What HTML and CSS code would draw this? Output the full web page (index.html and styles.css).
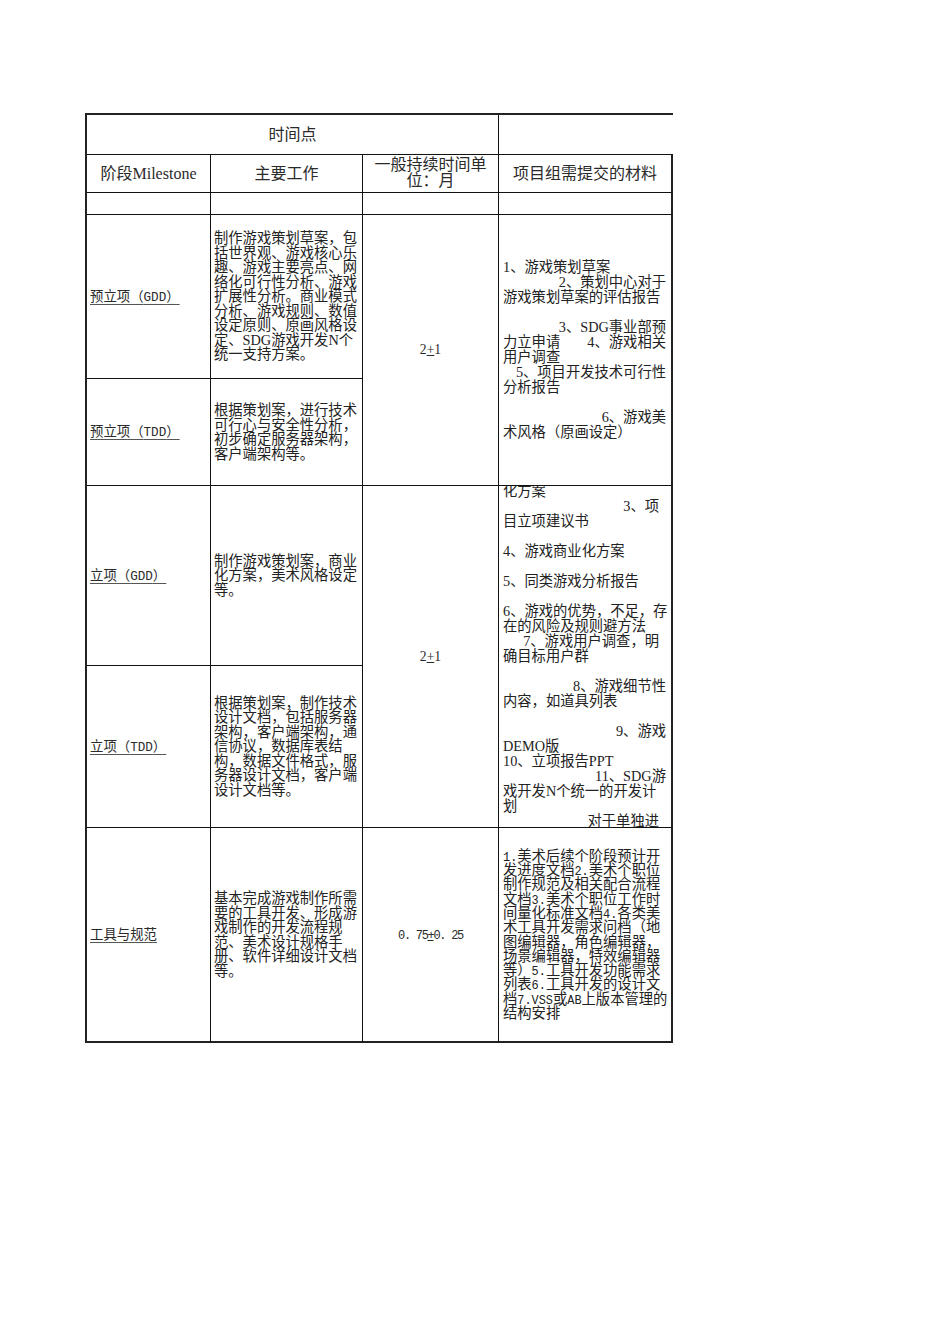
FILE: index.html
```html
<!DOCTYPE html>
<html lang="zh-CN">
<head>
<meta charset="utf-8">
<title>项目阶段</title>
<link rel="stylesheet" href="styles.css">
</head>
<body>
<div class="page">
  <div class="sheet">
    <div class="cell hdr span3 mid ctr"><div>时间点</div></div>
    <div class="cell hdr top-last"></div>

    <div class="cell hdr mid ctr"><div>阶段Milestone</div></div>
    <div class="cell hdr mid ctr"><div>主要工作</div></div>
    <div class="cell hdr mid ctr tight"><div>一般持续时间单<br>位：月</div></div>
    <div class="cell hdr mid ctr last"><div>项目组需提交的材料</div></div>

    <div class="cell"></div>
    <div class="cell"></div>
    <div class="cell"></div>
    <div class="cell last"></div>

    <div class="cell mid label"><div><span class="ul">预立项（<span class="m">GDD</span>）</span></div></div>
    <div class="cell mid work"><div>制作游戏策划草案，包<br>括世界观、游戏核心乐<br>趣、游戏主要亮点、网<br>络化可行性分析、游戏<br>扩展性分析。商业模式<br>分析、游戏规则、数值<br>设定原则、原画风格设<br>定、SDG游戏开发N个<br>统一支持方案。</div></div>
    <div class="cell mid ctr dur r2"><div>2<u>+</u>1</div></div>
    <div class="cell mid mat r2 last">
      <div class="ln">1、游戏策划草案</div>
      <div class="ln rt">2、策划中心对于</div>
      <div class="ln">游戏策划草案的评估报告</div>
      <div class="ln">&nbsp;</div>
      <div class="ln rt">3、SDG事业部预</div>
      <div class="ln split"><span>力立申请</span><span>4、游戏相关</span></div>
      <div class="ln">用户调查</div>
      <div class="ln rt">5、项目开发技术可行性</div>
      <div class="ln">分析报告</div>
      <div class="ln">&nbsp;</div>
      <div class="ln rt">6、游戏美</div>
      <div class="ln">术风格（原画设定）</div>
    </div>

    <div class="cell mid label"><div><span class="ul">预立项（<span class="m">TDD</span>）</span></div></div>
    <div class="cell mid work"><div>根据策划案，进行技术<br>可行心与安全性分析，<br>初步确定服务器架构，<br>客户端架构等。</div></div>

    <div class="cell mid label"><div><span class="ul">立项（<span class="m">GDD</span>）</span></div></div>
    <div class="cell mid work"><div>制作游戏策划案，商业<br>化方案，美术风格设定<br>等。</div></div>
    <div class="cell mid ctr dur r2"><div>2<u>+</u>1</div></div>
    <div class="cell mid mat r2 last">
      <div class="ln">化方案</div>
      <div class="ln rt pr">3、项</div>
      <div class="ln">目立项建议书</div>
      <div class="ln">&nbsp;</div>
      <div class="ln">4、游戏商业化方案</div>
      <div class="ln">&nbsp;</div>
      <div class="ln">5、同类游戏分析报告</div>
      <div class="ln">&nbsp;</div>
      <div class="ln">6、游戏的优势，不足，存</div>
      <div class="ln">在的风险及规则避方法</div>
      <div class="ln rt pr">7、游戏用户调查，明</div>
      <div class="ln">确目标用户群</div>
      <div class="ln">&nbsp;</div>
      <div class="ln rt">8、游戏细节性</div>
      <div class="ln">内容，如道具列表</div>
      <div class="ln">&nbsp;</div>
      <div class="ln rt">9、游戏</div>
      <div class="ln lat">DEMO版</div>
      <div class="ln lat">10、立项报告PPT</div>
      <div class="ln rt lat">11、SDG游</div>
      <div class="ln">戏开发N个统一的开发计</div>
      <div class="ln">划</div>
      <div class="ln rt pr">对于单独进</div>
    </div>

    <div class="cell mid label"><div><span class="ul">立项（<span class="m">TDD</span>）</span></div></div>
    <div class="cell mid work"><div>根据策划案，制作技术<br>设计文档，包括服务器<br>架构，客户端架构，通<br>信协议，数据库表结<br>构，数据文件格式，服<br>务器设计文档，客户端<br>设计文档等。</div></div>

    <div class="cell mid label bot"><div><span class="ul">工具与规范</span></div></div>
    <div class="cell mid work bot"><div>基本完成游戏制作所需<br>要的工具开发、形成游<br>戏制作的开发流程规<br>范、美术设计规格手<br>册、软件详细设计文档<br>等。</div></div>
    <div class="cell mid ctr dur bot"><div><span class="m">0. 75<u>+</u>0. 25</span></div></div>
    <div class="cell mid work mat2 bot last"><div><span class="m">1.</span>美术后续个阶段预计开<br>发进度文档<span class="m">2.</span>美术个职位<br>制作规范及相关配合流程<br>文档<span class="m">3.</span>美术个职位工作时<br>间量化标准文档<span class="m">4.</span>各类美<br>术工具开发需求问档（地<br>图编辑器，角色编辑器，<br>场景编辑器，特效编辑器<br>等）<span class="m">5.</span>工具开发功能需求<br>列表<span class="m">6.</span>工具开发的设计文<br>档<span class="m">7.VSS</span>或<span class="m">AB</span>上版本管理的<br>结构安排</div></div>
  </div>
</div>
</body>
</html>
```

FILE: styles.css
```css
html, body {
  margin: 0;
  padding: 0;
  background: #ffffff;
}

body {
  font-family: "Liberation Serif", "Noto Sans CJK SC", serif;
  color: #222222;
}

.page {
  padding: 113px 0 0 85px;
}

.sheet {
  display: grid;
  grid-template-columns: 124px 152px 136px 174px;
  grid-template-rows: 40px 38px 22px 164px 107px 180px 162px 215px;
  width: 586px;
  border-top: 2px solid #222;
  border-left: 2px solid #222;
}

.cell {
  box-sizing: border-box;
  border-right: 1px solid #111;
  border-bottom: 1px solid #111;
  overflow: hidden;
  min-width: 0;
  min-height: 0;
}

.span3 {
  grid-column: 1 / 4;
}

.top-last {
  border-right: none;
}

.last {
  border-right: 2px solid #222;
}

.bot {
  border-bottom: 2px solid #222;
}

.r2 {
  grid-row: span 2;
}

.mid {
  display: flex;
  flex-direction: column;
  justify-content: center;
}

.ctr {
  align-items: center;
  text-align: center;
}

.hdr {
  font-size: 16px;
  line-height: 18px;
  color: #2a2a2a;
}

.hdr.tight {
  line-height: 16px;
  padding-bottom: 2px;
}

.label {
  font-size: 13.4px;
  line-height: 16px;
  padding-left: 3px;
  color: #2a2a2a;
}

.ul {
  text-decoration: underline;
  text-decoration-color: #555;
  text-underline-offset: 3px;
  white-space: nowrap;
}

.m {
  font-family: "Liberation Mono", "Noto Sans CJK SC", monospace;
  font-size: 11.9px;
  line-height: 10px;
}

.label .m {
  font-size: 12.6px;
}

.work {
  font-size: 14.3px;
  line-height: 14.5px;
  padding-left: 3px;
  white-space: nowrap;
}

.dur {
  font-size: 13.6px;
  line-height: 16px;
  color: #2a2a2a;
}

.dur .m {
  font-size: 12px;
  letter-spacing: -1.3px;
}

.dur u {
  text-underline-offset: 1px;
}

.mat {
  font-size: 14.3px;
  line-height: 15px;
  padding: 0 5px 0 4px;
}

.mat2 {
  padding-left: 4px;
  line-height: 14.3px;
}

.ln {
  white-space: nowrap;
  height: 15px;
}

.ln.lat {
  height: 16px;
}

.rt {
  text-align: right;
}

.rt.pr {
  padding-right: 7px;
}

.split {
  display: flex;
  justify-content: space-between;
}
```
